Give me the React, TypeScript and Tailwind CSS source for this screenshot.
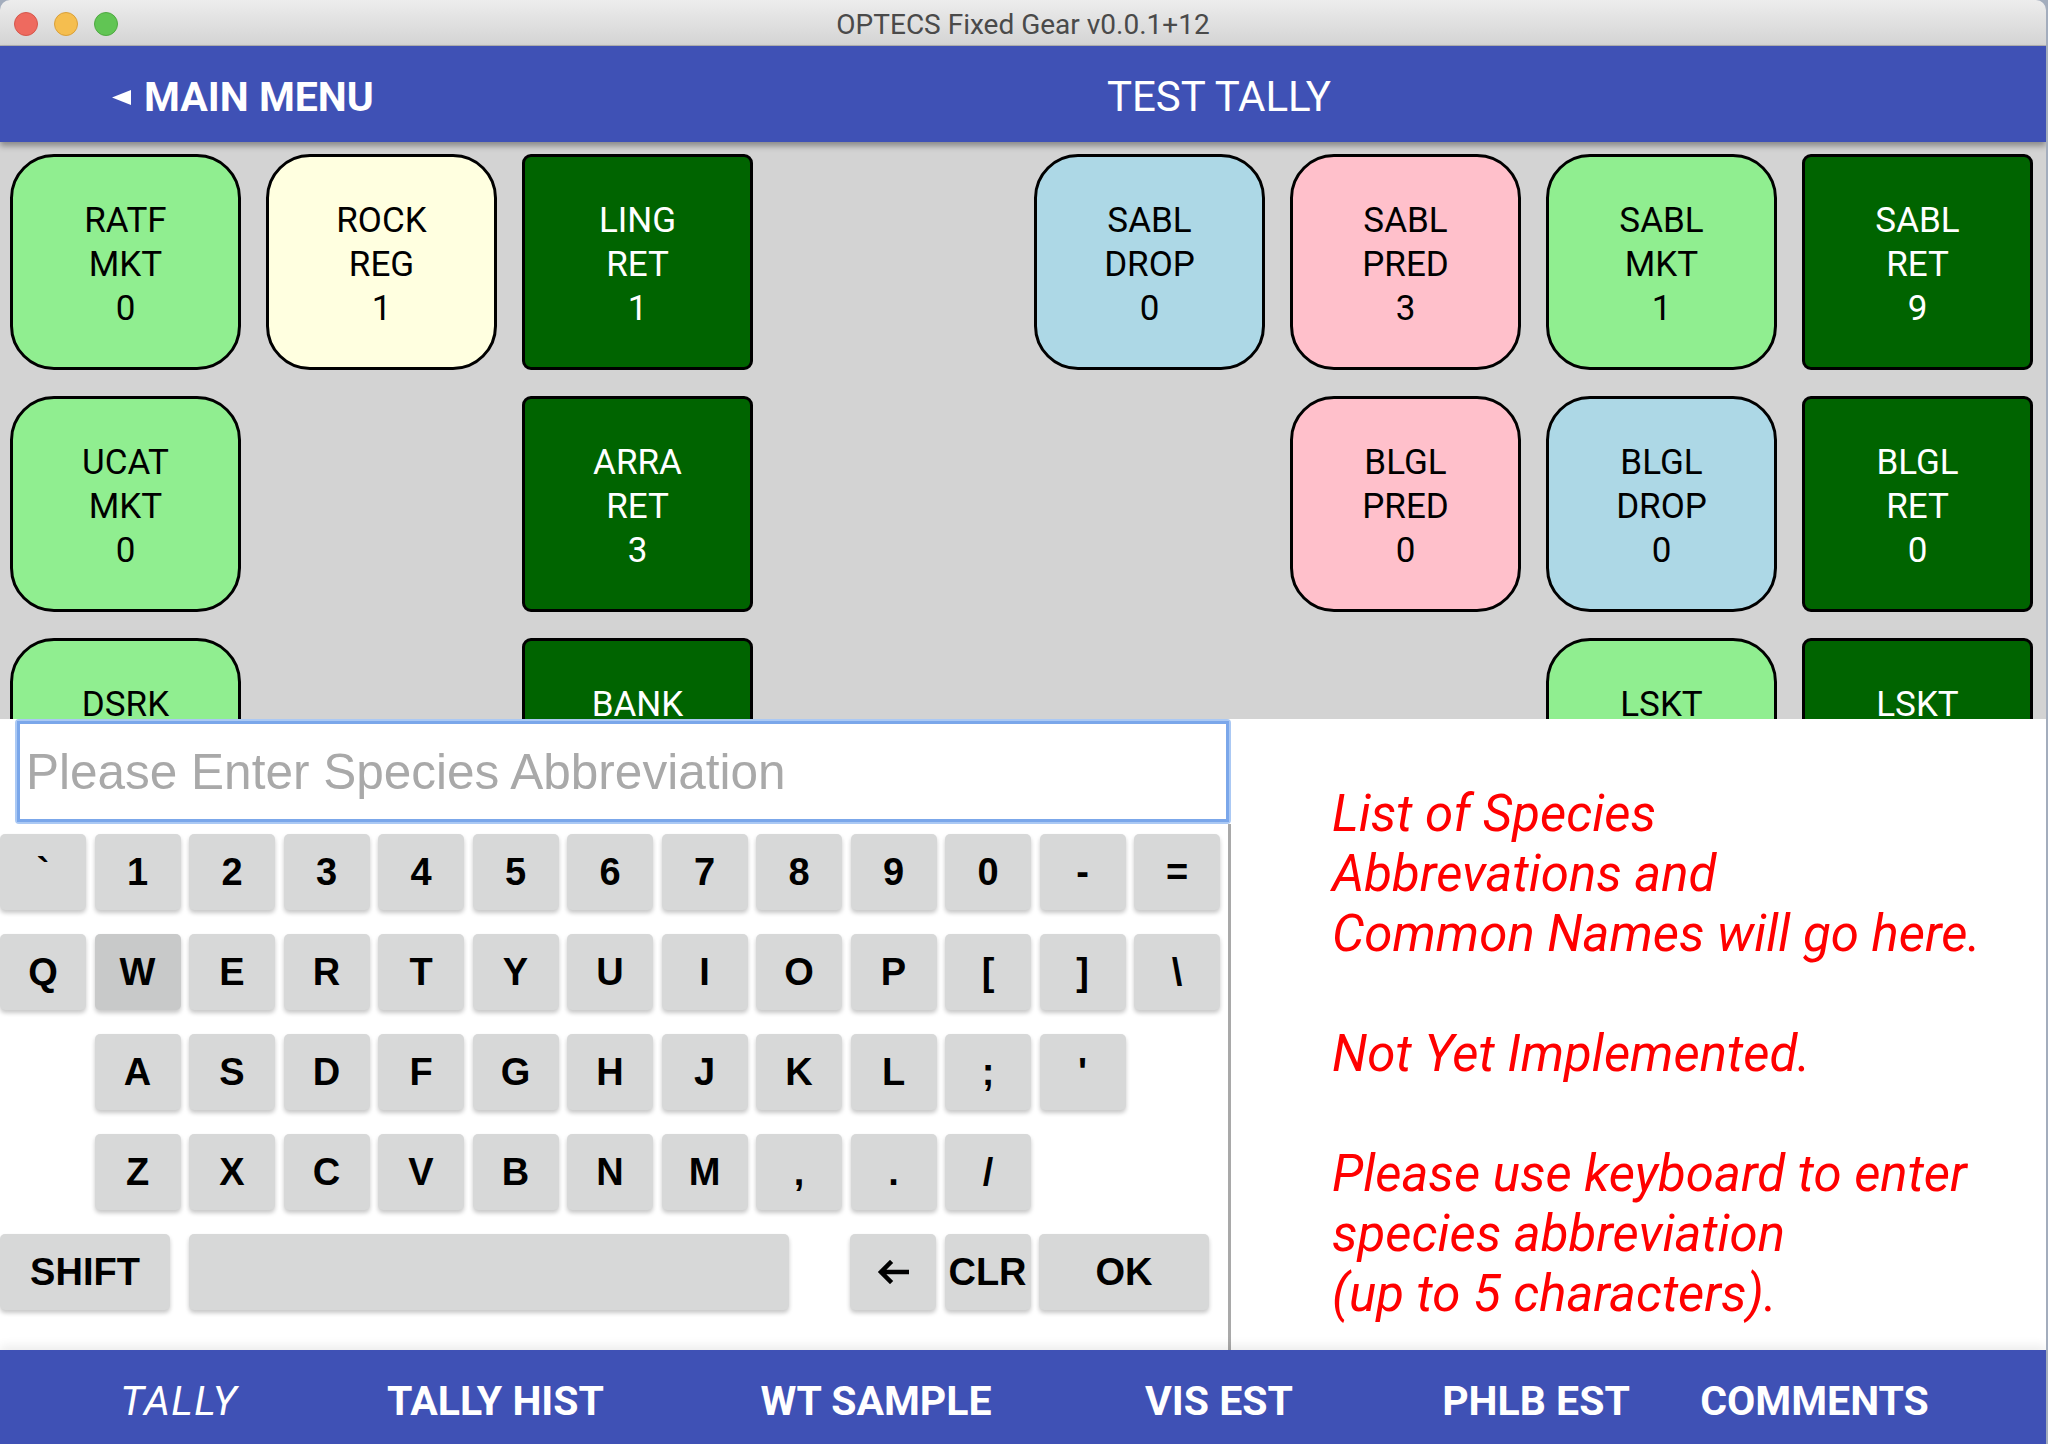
import React from "react";

type Kind = "lg" | "ly" | "dg" | "lb" | "pk";
type Tile = { a: string; b: string; n: string; k: Kind } | null;

const T = (a: string, b: string, n: string, k: Kind): Tile => ({ a, b, n, k });

const grid: Tile[][] = [
  [T("RATF", "MKT", "0", "lg"), T("ROCK", "REG", "1", "ly"), T("LING", "RET", "1", "dg"), null, T("SABL", "DROP", "0", "lb"), T("SABL", "PRED", "3", "pk"), T("SABL", "MKT", "1", "lg"), T("SABL", "RET", "9", "dg")],
  [T("UCAT", "MKT", "0", "lg"), null, T("ARRA", "RET", "3", "dg"), null, null, T("BLGL", "PRED", "0", "pk"), T("BLGL", "DROP", "0", "lb"), T("BLGL", "RET", "0", "dg")],
  [T("DSRK", "", "", "lg"), null, T("BANK", "", "", "dg"), null, null, null, T("LSKT", "", "", "lg"), T("LSKT", "", "", "dg")],
];

const kindCls: Record<Kind, string> = {
  lg: "bg-[#90ee90] text-black rounded-[44px]",
  ly: "bg-[#ffffe0] text-black rounded-[44px]",
  lb: "bg-[#add8e6] text-black rounded-[44px]",
  pk: "bg-[#ffc0cb] text-black rounded-[44px]",
  dg: "bg-[#006400] text-white rounded-[9px]",
};

function Key({ label, w = "w-[86px]", dark = false, children }: { label?: string; w?: string; dark?: boolean; children?: React.ReactNode }) {
  return (
    <div
      className={`${w} h-[76px] shrink-0 rounded-[5px] ${dark ? "bg-[#c8c9c9]" : "bg-[#d7d8d8]"} shadow-[0_3px_4px_rgba(0,0,0,0.22)] flex items-center justify-center text-black font-bold text-[38px] font-['Liberation_Sans',Arial,sans-serif]`}
    >
      {children ?? label}
    </div>
  );
}

export default function App() {
  const row1 = ["`", "1", "2", "3", "4", "5", "6", "7", "8", "9", "0", "-", "="];
  const row2 = ["Q", "W", "E", "R", "T", "Y", "U", "I", "O", "P", "[", "]", "\\"];
  const row3 = ["A", "S", "D", "F", "G", "H", "J", "K", "L", ";", "'"];
  const row4 = ["Z", "X", "C", "V", "B", "N", "M", ",", ".", "/"];

  return (
    <div className="w-[2048px] h-[1444px] bg-[#a3adbd] flex overflow-hidden">
      <div className="w-[2046px] h-[1444px] flex flex-col rounded-t-[10px] overflow-hidden font-['Roboto',sans-serif]">
        {/* Title bar */}
        <div className="h-[46px] shrink-0 bg-gradient-to-b from-[#ededed] to-[#d4d4d4] border-b border-[#b1b1b1] grid grid-cols-[1fr_auto_1fr] items-center">
          <div className="flex items-center gap-[16px] pl-[14px] pt-[3px]">
            <div className="w-[24px] h-[24px] rounded-full bg-[#ee6a5f] border border-[#d5574c]" />
            <div className="w-[24px] h-[24px] rounded-full bg-[#f5be4f] border border-[#d9a03a]" />
            <div className="w-[24px] h-[24px] rounded-full bg-[#61c554] border border-[#4fa942]" />
          </div>
          <div className="text-[28px] text-[#4a4a4a] leading-none pt-[5px]">OPTECS Fixed Gear v0.0.1+12</div>
          <div />
        </div>

        {/* Header */}
        <div className="h-[96px] shrink-0 bg-[#3f51b5] flex items-center pt-[6px] relative z-10 shadow-[0_4px_6px_rgba(0,0,0,0.35)]">
          <div className="w-[392px] pl-[112px] flex items-center gap-[13px] text-white">
            <svg width="19" height="15" viewBox="0 0 19 15"><polygon points="0,7.5 19,0 19,15" fill="white" /></svg>
            <span className="text-[41px] font-bold leading-none">MAIN MENU</span>
          </div>
          <div className="flex-1 text-center text-white text-[42px] leading-none">TEST TALLY</div>
        </div>

        {/* Tally grid */}
        <div className="h-[577px] shrink-0 bg-[#d3d3d3] overflow-hidden">
          <div className="grid grid-cols-[repeat(8,231px)] auto-rows-[216px] gap-x-[25px] gap-y-[26px] pl-[10px] pt-[12px]">
            {grid.flat().map((t, i) =>
              t ? (
                t.b ? (
                  <div key={i} className={`border-[3px] border-black flex items-center justify-center text-center pt-[6px] ${kindCls[t.k]}`}>
                    <div className="text-[35px] leading-[44px]">
                      <div>{t.a}</div>
                      <div>{t.b}</div>
                      <div>{t.n}</div>
                    </div>
                  </div>
                ) : (
                  <div key={i} className={`border-[3px] border-black flex items-start justify-center text-center pt-[42px] ${kindCls[t.k]}`}>
                    <div className="text-[35px] leading-[44px]">{t.a}</div>
                  </div>
                )
              ) : (
                <div key={i} />
              )
            )}
          </div>
        </div>

        {/* Bottom panel */}
        <div className="h-[631px] shrink-0 bg-white flex">
          <div className="w-[1231px] flex flex-col">
            <div className="ml-[15px] h-[105px] shrink-0 rounded-[4px] bg-[#abc9f4] p-[2px]">
              <div className="h-full border-[3px] border-[#7ba7ea] bg-white flex items-center pl-[6px] text-[49.5px] text-[#a9a9a9] leading-none font-['Liberation_Sans',Arial,sans-serif]">
                Please Enter Species Abbreviation
              </div>
            </div>
            <div className="flex-1 border-r-[3px] border-[#a9a9a9] pt-[10px] flex flex-col gap-[24px]">
              <div className="flex gap-[8.5px]">
                {row1.map((k) => (
                  <Key key={k} label={k} />
                ))}
              </div>
              <div className="flex gap-[8.5px]">
                {row2.map((k) => (
                  <Key key={k} label={k} dark={k === "W"} />
                ))}
              </div>
              <div className="flex gap-[8.5px] pl-[94.5px]">
                {row3.map((k) => (
                  <Key key={k} label={k} />
                ))}
              </div>
              <div className="flex gap-[8.5px] pl-[94.5px]">
                {row4.map((k) => (
                  <Key key={k} label={k} />
                ))}
              </div>
              <div className="flex">
                <Key label="SHIFT" w="w-[170px]" />
                <div className="ml-[19px]">
                  <Key label="" w="w-[600px]" />
                </div>
                <div className="ml-[61px] flex gap-[8.5px]">
                  <Key w="w-[86px]">
                    <svg width="32" height="24" viewBox="0 0 32 24">
                      <path d="M30 12 H5 M13 3 L4 12 L13 21" stroke="black" strokeWidth="4.5" fill="none" strokeLinecap="square" />
                    </svg>
                  </Key>
                  <Key label="CLR" />
                  <Key label="OK" w="w-[170px]" />
                </div>
              </div>
            </div>
          </div>
          <div className="flex-1 pl-[101px] pt-[65px] text-[#ff0000] italic text-[51px] leading-[60px]">
            <div>List of Species</div>
            <div>Abbrevations and</div>
            <div>Common Names will go here.</div>
            <div>&nbsp;</div>
            <div>Not Yet Implemented.</div>
            <div>&nbsp;</div>
            <div>Please use keyboard to enter</div>
            <div>species abbreviation</div>
            <div>(up to 5 characters).</div>
          </div>
        </div>

        {/* Footer */}
        <div className="h-[94px] shrink-0 bg-[#3f51b5] flex items-center pt-[8px] text-white text-[41px] leading-none whitespace-nowrap shadow-[0_-4px_10px_rgba(0,0,0,0.08)] relative">
          <div className="ml-[120px] w-[118px] flex justify-center italic font-normal tracking-[1.5px]">TALLY</div>
          <div className="ml-[145px] w-[225px] flex justify-center font-bold">TALLY HIST</div>
          <div className="ml-[152px] w-[232px] flex justify-center font-bold">WT SAMPLE</div>
          <div className="ml-[154px] w-[146px] flex justify-center font-bold">VIS EST</div>
          <div className="ml-[151px] w-[186px] flex justify-center font-bold">PHLB EST</div>
          <div className="ml-[71px] w-[229px] flex justify-center font-bold">COMMENTS</div>
        </div>
      </div>
    </div>
  );
}
